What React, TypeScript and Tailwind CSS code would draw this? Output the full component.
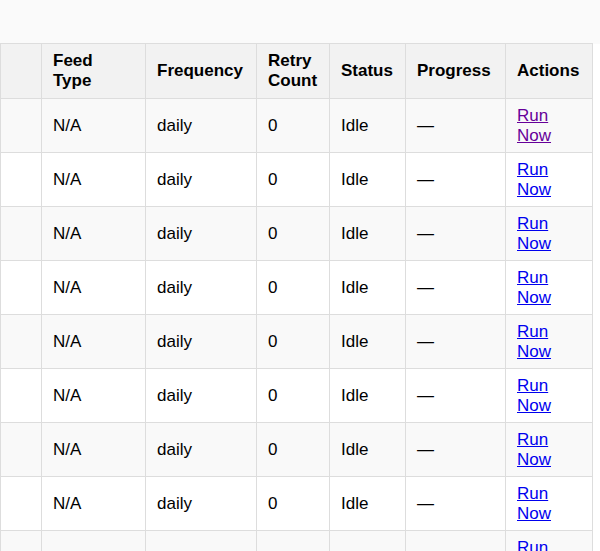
export default function App() {
  const rows = Array.from({ length: 9 });
  const widths = [41, 104, 111, 73, 76, 100, 87];
  const th = "border border-[#dddddd] px-[11px] text-left font-bold align-middle leading-[20px]";
  const td = "border border-[#dddddd] px-[11px] align-middle leading-[20px]";
  return (
    <div className="w-[600px] h-[551px] overflow-hidden bg-white text-black text-[17px]" style={{ fontFamily: '"Liberation Sans", Arial, sans-serif' }}>
      <div className="h-[44px] bg-[#fafafa]" />
      <table className="border-collapse table-fixed" style={{ width: 592, marginTop: -1 }}>
        <colgroup>
          {widths.map((w, i) => <col key={i} style={{ width: w }} />)}
        </colgroup>
        <thead>
          <tr className="h-[55px] bg-[#f2f2f2]">
            <th className={th}></th>
            <th className={th}>Feed<br />Type</th>
            <th className={th}>Frequency</th>
            <th className={th}>Retry<br />Count</th>
            <th className={th}>Status</th>
            <th className={th}>Progress</th>
            <th className={th}>Actions</th>
          </tr>
        </thead>
        <tbody>
          {rows.map((_, i) => (
            <tr key={i} className={`h-[54px] ${i % 2 === 0 ? "bg-[#f9f9f9]" : "bg-white"}`}>
              <td className={td}></td>
              <td className={td}>N/A</td>
              <td className={td}>daily</td>
              <td className={td}>0</td>
              <td className={td}>Idle</td>
              <td className={td}>—</td>
              <td className={td}>
                <a href="#" className={`underline ${i === 0 ? "text-[#660099]" : "text-[#0000ee]"}`}>Run<br />Now</a>
              </td>
            </tr>
          ))}
        </tbody>
      </table>
    </div>
  );
}
